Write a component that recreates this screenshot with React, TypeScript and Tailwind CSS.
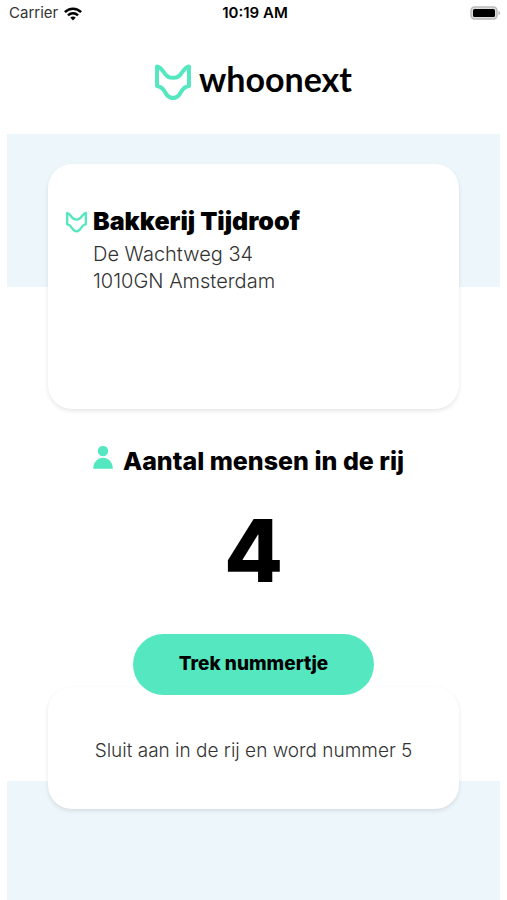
import React from 'react';

interface IconProps {
  className?: string;
}

const FoxIcon: React.FC<IconProps & { strokeWidth: number }> = ({ className, strokeWidth }) => (
  <svg viewBox="0 0 36 36" fill="none" stroke="currentColor" strokeWidth={strokeWidth} strokeLinejoin="round" className={className} aria-hidden="true">
    <path d="M2 2.500C6 3.500 7.500 6.500 10 9.800C12 12.800 14 13.800 18 13.800C22 13.800 24 12.800 26 9.800C28.500 6.500 30 3.500 34 2.500V22C29.500 22.500 28 24.500 26 28C24 32 22 34 18 34C14 34 12 32 10 28C8 24.500 6.500 22.500 2 22Z" />
  </svg>
);

const PersonIcon: React.FC<IconProps> = ({ className }) => (
  <svg viewBox="0 0 20 24" fill="currentColor" className={className} aria-hidden="true">
    <circle cx="10" cy="6" r="5.200" />
    <path d="M.2 23.800C.4 16.800 4.500 12.800 10 12.800S19.600 16.800 19.800 23.800Z" />
  </svg>
);

const WifiIcon: React.FC<IconProps> = ({ className }) => (
  <svg viewBox="0 0 18 14" fill="none" stroke="currentColor" strokeWidth="2.500" className={className} aria-hidden="true">
    <path d="M.9 5.200C5.500.5 12.500.5 17.100 5.200" />
    <path d="M4 8.300C6.800 5.500 11.200 5.500 14 8.300" />
    <path d="M6.300 10.600C7.900 9.100 10.100 9.100 11.700 10.600L9 13.500Z" fill="currentColor" stroke="none" />
  </svg>
);

const BatteryIcon: React.FC<IconProps> = ({ className }) => (
  <svg viewBox="0 0 31 15" className={className} aria-hidden="true">
    <rect x="1" y="1" width="26" height="12" rx="3.500" fill="#ddd" stroke="#bbb" strokeWidth="1.500" />
    <rect x="3" y="3" width="22" height="8" rx="1.500" fill="#000" />
    <path d="M28.500 5C30.500 5.500 30.500 8.500 28.500 9Z" fill="#b5b5b5" />
  </svg>
);

const StatusBar: React.FC = () => (
  <div className="grid grid-cols-3 items-center h-7 pb-px pl-[9px] pr-1.5 text-[15px]">
    <div className="flex items-center gap-1.5 text-[#333]">
      Carrier
      <WifiIcon className="w-[18px] h-3.5 text-black" />
    </div>
    <time className="text-center font-semibold">10:19 AM</time>
    <BatteryIcon className="w-[31px] h-[15px] justify-self-end" />
  </div>
);

const shop = {
  name: 'Bakkerij Tijdroof',
  street: 'De Wachtweg 34',
  city: '1010GN Amsterdam',
};

const App: React.FC = () => {
  const [queueLength, setQueueLength] = React.useState(4);

  return (
    <div className="flex flex-col min-h-screen bg-white text-black font-['Inter',sans-serif]">
      <StatusBar />

      <header className="flex items-center justify-center gap-2 h-[106px] pb-1">
        <FoxIcon className="w-9 h-9 mt-1.5 text-[#55e7c0]" strokeWidth={4} />
        <span className="text-[34px] leading-9 font-bold font-['Lato',sans-serif]">whoonext</span>
      </header>

      <main className="flex flex-col flex-1">
        <div className="h-[153px] mx-[7px] bg-[#edf6fb]" />

        <section className="-mt-[123px] mx-12 min-h-[245px] pt-[43px] px-[18px] rounded-3xl bg-white shadow-[0_2px_4px_rgba(0,0,0,0.1)]">
          <div className="flex gap-1.5">
            <FoxIcon className="w-[21px] h-[22px] mt-1 text-[#55e7c0]" strokeWidth={4} />
            <div>
              <h1 className="text-[25px] leading-7 font-black">{shop.name}</h1>
              <address className="mt-1.5 text-xl leading-[27px] font-light not-italic text-[#333]">
                {shop.street}
                <br />
                {shop.city}
              </address>
            </div>
          </div>
        </section>

        <section className="flex flex-col items-center mt-9">
          <div className="flex items-start gap-2.5 pr-2.5">
            <PersonIcon className="w-5 h-6 text-[#55e7c0]" />
            <h2 className="text-[25px] leading-8 font-extrabold">Aantal mensen in de rij</h2>
          </div>
          <p className="mt-[30px] text-[86px] leading-[88px] font-extrabold">{queueLength}</p>
        </section>

        <button
          type="button"
          className="relative z-10 self-center mt-[39px] w-[241px] h-[61px] rounded-full bg-[#55e7c0] text-[19px] font-extrabold"
          onClick={() => setQueueLength(queueLength + 1)}
        >
          Trek nummertje
        </button>

        <section className="relative -mt-2 mx-12 pt-[50px] pb-[45px] text-center rounded-3xl bg-white shadow-[0_2px_4px_rgba(0,0,0,0.1)]">
          <p className="text-[19px] leading-[27px] font-light text-[#333]">
            Sluit aan in de rij en word nummer {queueLength + 1}
          </p>
        </section>

        <div className="flex-1 -mt-7 mx-[7px] bg-[#edf6fb]" />
      </main>
    </div>
  );
};

export default App;
